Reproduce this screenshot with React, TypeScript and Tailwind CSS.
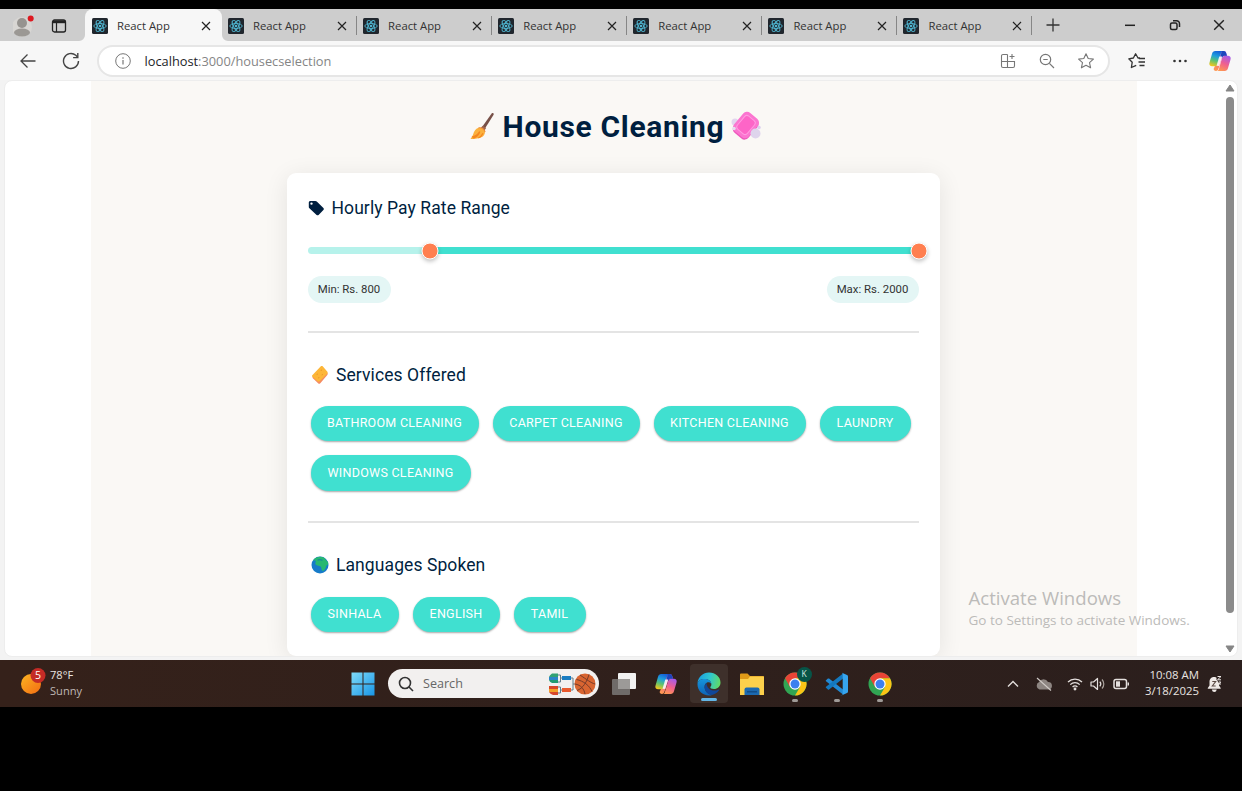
import type { ReactNode } from "react";

const SEGOE = "font-['Open_Sans','Noto_Sans',sans-serif]";

function ReactMark() {
  return (
    <svg viewBox="0 0 16 16" className="size-4 shrink-0">
      <rect width="16" height="16" rx="1.5" fill="#20262d" />
      <g fill="none" stroke="#4fb4cf" strokeWidth="0.9">
        <ellipse cx="8" cy="8" rx="6.2" ry="2.5" />
        <ellipse cx="8" cy="8" rx="6.2" ry="2.5" transform="rotate(60 8 8)" />
        <ellipse cx="8" cy="8" rx="6.2" ry="2.5" transform="rotate(120 8 8)" />
      </g>
      <circle cx="8" cy="8" r="1.3" fill="#4fb4cf" />
    </svg>
  );
}

function Cross({ className }: { className: string }) {
  return (
    <svg viewBox="0 0 10 10" className={className}>
      <path d="M1 1 9 9M9 1 1 9" stroke="#222" strokeWidth="1.2" fill="none" />
    </svg>
  );
}

function Tab({ active = false, divider = true }: { active?: boolean; divider?: boolean }) {
  return (
    <div
      className={
        active
          ? "relative flex h-8 w-[136.5px] shrink-0 items-center rounded-t-lg bg-[#f7f7f7] pt-px pl-[7px]"
          : "relative flex h-8 w-[135.1px] shrink-0 items-center pt-px pl-[6.5px]"
      }
    >
      {active && (
        <>
          <svg viewBox="0 0 6 6" className="absolute bottom-0 -left-1.5 size-1.5">
            <path d="M6 0v6H0A6 6 0 0 0 6 0Z" fill="#f7f7f7" />
          </svg>
          <svg viewBox="0 0 6 6" className="absolute -right-1.5 bottom-0 size-1.5">
            <path d="M0 0v6h6A6 6 0 0 1 0 0Z" fill="#f7f7f7" />
          </svg>
        </>
      )}
      <ReactMark />
      <span className="ml-[9px] w-[79px] text-[11.300px] leading-4 whitespace-nowrap text-[#333]">React App</span>
      <Cross className="ml-[5px] size-[10px]" />
      {!active && divider && <div className="absolute top-[7px] right-0 h-[19px] w-px bg-[#868686]" />}
    </div>
  );
}

function Copilot({ className, id }: { className: string; id: string }) {
  return (
    <svg viewBox="0 0 24 24" className={className}>
      <defs>
        <linearGradient id={id + "a"} x1="0.6" y1="0" x2="0.3" y2="1">
          <stop offset="0" stopColor="#1560d8" />
          <stop offset="0.35" stopColor="#1e9fdc" />
          <stop offset="0.65" stopColor="#5cc272" />
          <stop offset="1" stopColor="#f2c61c" />
        </linearGradient>
        <linearGradient id={id + "b"} x1="0.7" y1="0" x2="0.3" y2="1">
          <stop offset="0" stopColor="#a75be8" />
          <stop offset="0.5" stopColor="#f0608f" />
          <stop offset="1" stopColor="#ff9852" />
        </linearGradient>
      </defs>
      <path d="M14 1h2.2c1.4 0 2.2.9 2.6 2.2l.9 3H17c-1.500 0-2.300.8-2.700 2L10.500 20c-.5 1.600-1.200 3-3 3-1.400 0-2.100-1-2.500-2.200z" fill={`url(#${id}b)`} />
      <path d="M6.800 1h9c-1.300 0-2.100.8-2.500 2.100L9.800 15c-.5 1.700-1.300 2.800-3.200 2.800H3.300C.8 17.800-.1 16 .6 13.500L3.300 4C3.900 2 5 1 6.800 1Z" fill={`url(#${id}a)`} />
      <path d="M17.200 23h-9c1.300 0 2.100-.8 2.500-2.100L14.200 9c.5-1.700 1.300-2.800 3.200-2.800h3.300c2.500 0 3.400 1.800 2.700 4.300L20.700 20c-.6 2-1.700 3-3.500 3Z" fill={`url(#${id}b)`} />
      <path d="M13.8 1h2.300c1.400 0 2.200.9 2.600 2.200l.9 3h-2.200c-1.600 0-2.300.4-2.900 2l-1.900-.2Z" fill="#1a46bd" />
      <path d="m11.200 7 3.200.1-3.200 10.400-3-.2Z" fill="#fff" opacity=".85" />
    </svg>
  );
}

function Broom() {
  return (
    <svg viewBox="0 0 28 30" className="h-[30px] w-[26px]">
      <path d="M23.500 1.200c1.400-.8 2.500.3 1.900 1.600L14.600 20l-2.900-2z" fill="#775047" />
      <path d="m13.600 14.600 3.800 2.500-3.200 4.600-4-2.800z" fill="#a0654d" />
      <path d="M9.500 17c3.300-.6 6.400 1.500 6.600 5-.5 4.500-4.500 7-15.600 7 1.100-1.500 2-2.800 2.700-4.700 1.400-4 3.100-6.700 6.300-7.300Z" fill="#fbb13d" />
      <path d="M2 27c4-1 6.500-3 8.500-6-1 4-4 6-7 7.200M9 28c2.500-1.200 4-3 5-5.200" stroke="#f5861f" strokeWidth="1.300" fill="none" />
      <path d="M9.200 17c3.500-.6 6.600 1.400 7 4.600" stroke="#ec8d37" strokeWidth="1.300" fill="none" />
    </svg>
  );
}

function Soap() {
  return (
    <svg viewBox="0 0 30 30" className="h-[30px] w-[30px]">
      <circle cx="4" cy="11" r="3.500" fill="#e2d5ee" />
      <rect x="5.500" y="3.500" width="19" height="24" rx="5" transform="rotate(40 15 15)" fill="#ee59bd" />
      <rect x="5.500" y="2" width="19" height="24" rx="5" transform="rotate(40 15 14)" fill="#fb75d0" />
      <rect x="8.500" y="5.500" width="13" height="17" rx="3" transform="rotate(40 15 14)" fill="#fd65c7" stroke="#ff9ae0" />
      <circle cx="24.500" cy="22.500" r="5" fill="#ded4ec" />
      <circle cx="28" cy="16.500" r="1.800" fill="#ddd0ee" />
      <circle cx="3" cy="17.500" r="1.800" fill="#e6dcee" />
    </svg>
  );
}

function Sponge() {
  return (
    <svg viewBox="0 0 18 20" className="h-5 w-[18px]">
      <path d="M1.500 11.500 10 3c.8-.7 1.600-.5 2.300.2l4 4.600c.6.800.5 1.500 0 2.200l-7 8.200c-.7.700-1.500.8-2.200 0l-5.500-5.300z" fill="#f58b62" />
      <path d="M1.300 10.200 9.600 1.500c.7-.6 1.600-.6 2.300 0l4.300 5c.6.800.5 1.400 0 2.200l-7.500 7.500c-.8.700-1.500.6-2.200 0l-5-4.500c-.6-.5-.7-1-.2-1.500Z" fill="#fdb638" />
      <path d="m6 9 .5.500M10 5l.6.500M11 9.500l.5.500M7.500 12.500l.5.500" stroke="#e89028" strokeWidth="1.500" />
    </svg>
  );
}

function Globe() {
  return (
    <svg viewBox="0 0 18 18" className="size-[18px]">
      <circle cx="9" cy="9" r="8.500" fill="#167bc9" />
      <path d="M2 4.500C4.500 1 9.500-.3 13.500 2c1.200 1 .6 1.700 1.600 2.200 1.500 1 2.300 2.300 2.100 4-.7 1-2 .8-2.200 2.500-.2 1.500-1.500 3.800-3.300 4.300-1.500-.8-1-2.500-1.700-4C9.200 9.500 5.500 10 4.500 8.200 3.800 6.500 5.700 5 4.200 4.500Z" fill="#27b872" />
      <path d="M6.500 4.200c1.500-1 3.500-.6 5 .2" stroke="#178e92" strokeWidth="1.200" fill="none" />
    </svg>
  );
}

function Chrome() {
  return (
    <svg viewBox="0 0 24 24" className="size-6">
      <circle cx="12" cy="12" r="11.500" fill="#31a553" />
      <path d="M2.040 6.250A11.500 11.500 0 0 1 21.960 6.250H12L7 15Z" fill="#e84436" />
      <path d="M21.960 6.250A11.500 11.500 0 0 1 12 23.500l5-8.600L12 6.250Z" fill="#fbc416" />
      <circle cx="12" cy="12" r="5.700" fill="#fff" />
      <circle cx="12" cy="12" r="4.500" fill="#3c7fee" />
    </svg>
  );
}

function Edge() {
  return (
    <svg viewBox="0 0 24 24" className="size-6">
      <defs>
        <linearGradient id="edgeTop" x1="0" y1="0.400" x2="1" y2="0.600">
          <stop offset="0" stopColor="#1b9fe0" />
          <stop offset="0.500" stopColor="#2fc6cf" />
          <stop offset="1" stopColor="#62dc62" />
        </linearGradient>
        <linearGradient id="edgeLow" x1="0" y1="0" x2="0" y2="1">
          <stop offset="0" stopColor="#1695dc" />
          <stop offset="1" stopColor="#0d63b6" />
        </linearGradient>
      </defs>
      <path d="M.5 11C1.200 4.800 6 .5 12 .5c6.500 0 11.500 4.500 11.500 10 0 4-3 6.500-6.500 6.500-2.500 0-4-.8-3.700-2 1-1 1.200-2 1-3.200C14 8.800 11.200 7 7.500 7 4 7 1.500 8.500.5 11Z" fill="url(#edgeTop)" />
      <path d="M.5 12C.8 8.800 4 7 7.500 7c3.800 0 6.500 2 6.800 4.800-1-1.300-2.500-2-4.300-1.200-2.500 1.200-3 4-2 7 1 2.800 3.500 5 7 5.400-1 .4-2 .5-3 .5C5.500 23.500.3 18.500.5 12Z" fill="url(#edgeLow)" />
      <path d="M9.700 11c-2 1.500-2.500 4-1.600 6.800 1 3 4 5.200 6.900 5.200 2.900-.8 5.300-2.300 7-4.700.4-.6-.1-.9-.7-.6-3.500 1.600-7.300 1-9.500-1.200C10.300 15 9.500 13 9.700 11Z" fill="#10479a" />
    </svg>
  );
}

function VsCode() {
  return (
    <svg viewBox="0 0 24 24" className="size-6">
      <path d="m1 8.200 1.900-1.600c.4-.3.8-.3 1.200 0L18 17.500v5L1 9.300c-.4-.3-.4-.8 0-1.100Z" fill="#2189d4" />
      <path d="m1 15.800 1.900 1.600c.4.3.8.3 1.200 0L18 6.500v-5L1 14.700c-.4.3-.4.800 0 1.100Z" fill="#1478be" />
      <path d="M17 .8 22 3c.8.4 1 1 1 1.600v14.800c0 .7-.3 1.300-1 1.600l-5 2.300c-.6.200-1 .1-1.500-.4 1 .8 2.200.1 2.200-1V2.100c0-1.100-1.200-1.800-2.200-1 .5-.5 1-.6 1.500-.3Z" fill="#36a5ef" />
    </svg>
  );
}

function Running() {
  return <div className="absolute bottom-[1px] left-1/2 h-[3px] w-[6px] -translate-x-1/2 rounded-full bg-[#a09b98]" />;
}

function AppSlot({ children, className }: { children: ReactNode; className: string }) {
  return <div className={"relative flex h-[39px] shrink-0 items-center justify-center " + className}>{children}</div>;
}

function Pill({ label, className }: { label: string; className: string }) {
  return (
    <button
      className={
        "flex h-[35.500px] shrink-0 items-center justify-center rounded-full bg-[#40e0d0] pt-px text-[12.500px] tracking-[0.022em] whitespace-nowrap text-white shadow-[0_1px_2px_rgba(0,0,0,0.350)] " +
        className
      }
    >
      {label}
    </button>
  );
}

function Thumb({ className }: { className: string }) {
  return (
    <div
      className={
        "absolute top-1/2 size-[17px] -translate-1/2 rounded-full border border-white bg-[#ff7f50] shadow-[0_2px_4px_rgba(0,0,0,0.250)] " +
        className
      }
    />
  );
}

function BrowserChrome() {
  return (
    <>
      <div className="flex h-8 shrink-0 items-center bg-[#cdcdcd]">
        <div className="flex w-[85px] shrink-0 items-center pt-px pl-[13px]">
          <svg viewBox="0 0 22 22" className="size-[22px]">
            <circle cx="9" cy="12" r="10" fill="#d8d6d3" />
            <circle cx="9" cy="8" r="5" fill="#96938f" />
            <ellipse cx="9" cy="17.500" rx="8" ry="4" fill="#9b9894" />
            <circle cx="17.700" cy="3.500" r="3" fill="#dd1920" />
          </svg>
          <svg viewBox="0 0 16 16" className="ml-4 size-4" fill="none" stroke="#222">
            <rect x="1.500" y="2" width="13" height="12" rx="2" strokeWidth="1.300" />
            <path d="M2 3.800h12" strokeWidth="2.800" />
            <path d="M5.500 5v9" strokeWidth="1.200" />
          </svg>
        </div>
        <Tab active />
        <Tab />
        <Tab />
        <Tab />
        <Tab />
        <Tab />
        <Tab />
        <svg viewBox="0 0 14 14" className="ml-[14px] size-[14px]">
          <path d="M7 .5v13M.5 7h13" stroke="#333" strokeWidth="1.300" />
        </svg>
        <svg viewBox="0 0 12 12" className="ml-[64px] size-3">
          <path d="M1 6.300h10" stroke="#222" strokeWidth="1.500" />
        </svg>
        <svg viewBox="0 0 12 12" className="ml-[33px] size-3" fill="none" stroke="#222" strokeWidth="1.500">
          <rect x="1.500" y="4" width="6.500" height="6.500" rx="1.500" />
          <path d="M4 1.700h3.500a3 3 0 0 1 3 3V8" />
        </svg>
        <Cross className="ml-[32px] size-[12px]" />
      </div>

      <div className="flex h-[39px] shrink-0 items-center bg-[#f7f7f7]">
        <div className="flex w-[97px] shrink-0 items-center pl-[19.500px]">
          <svg viewBox="0 0 16 16" className="size-4" fill="none" stroke="#444" strokeWidth="1.300">
            <path d="M15.500 8H1M7.500 1.500 1 8l6.500 6.500" />
          </svg>
          <svg viewBox="0 0 18 18" className="ml-[26px] size-[18px]" fill="none" stroke="#444" strokeWidth="1.400">
            <path d="M16.500 9A7.500 7.500 0 1 1 13.800 3.250L15.500 5" />
            <path d="M15.800 1v4.600h-4.700" />
          </svg>
        </div>
        <div className="mt-px flex h-8 w-[1013px] shrink-0 items-center rounded-full border-2 border-[#e6e6e6] bg-white pl-[15.500px]">
          <svg viewBox="0 0 16 16" className="size-4" fill="none" stroke="#777">
            <circle cx="8" cy="8" r="7.300" />
            <path d="M8 7v4.500M8 4.300v1.400" strokeWidth="1.200" />
          </svg>
          <span className="ml-[14px] w-[855px] pt-px text-[12.800px] whitespace-nowrap text-[#858585]">
            <span className="text-[#1d1d28]">localhost</span>:3000/housecselection
          </span>
          <svg viewBox="0 0 16 16" className="size-4 shrink-0" fill="none" stroke="#777" strokeWidth="1.100">
            <path d="M7.500 1.500H3A1.500 1.500 0 0 0 1.500 3v10A1.500 1.500 0 0 0 3 14.500h10a1.500 1.500 0 0 0 1.500-1.500V8.500H1.500M7.500 1.500v13M12 1v5M9.500 3.500h5" />
          </svg>
          <svg viewBox="0 0 16 16" className="ml-[23px] size-4 shrink-0" fill="none" stroke="#777" strokeWidth="1.200">
            <circle cx="6.500" cy="6.500" r="5.200" />
            <path d="m10.400 10.400 4.600 4.600M4.300 6.500h4.400" />
          </svg>
          <svg viewBox="0 0 18 18" className="ml-[22px] size-[18px] shrink-0" fill="none" stroke="#777" strokeWidth="1.100" strokeLinejoin="round">
            <path d="m9 1.700 2.200 4.800 5.200.6-3.900 3.500 1.100 5.200L9 13.200l-4.600 2.600 1.100-5.200L1.600 7.100l5.200-.6z" />
          </svg>
        </div>
        <svg viewBox="0 0 18 18" className="mt-px ml-[18px] size-[18px] shrink-0" fill="none" stroke="#333" strokeWidth="1.300" strokeLinejoin="round">
          <path d="M12 6 10 6 7.600 1.700 5.400 6 .8 6.800l3.400 3.500-.8 5.200 4.800-2.200M11 6.500H17M10.500 10h6.500M11.500 13.500h5" />
        </svg>
        <svg viewBox="0 0 16 4" className="ml-[26px] h-1 w-4 shrink-0" fill="#333">
          <circle cx="2.500" cy="2" r="1.300" />
          <circle cx="8" cy="2" r="1.300" />
          <circle cx="13.500" cy="2" r="1.300" />
        </svg>
        <Copilot id="bar" className="ml-[21px] size-[22px] shrink-0" />
      </div>
    </>
  );
}

function SearchCard() {
  return (
    <div className="mt-[17px] ml-[195.500px] h-[483px] w-[653px] rounded-[9px] bg-white px-[21px] shadow-[0_4px_24px_rgba(0,0,0,0.090)]">
      <div className="flex h-[69px] items-center text-[17.500px] text-[#001f3f]">
        <svg viewBox="0 0 16 16" className="size-4">
          <path
            fillRule="evenodd"
            d="M.8 2.500c0-1 .7-1.600 1.600-1.600h5c.6 0 1 .2 1.400.6l6.600 6.400c.6.600.6 1.500 0 2.100l-4.800 4.900c-.6.600-1.400.6-2 0L1.400 8.200C1 7.800.8 7.400.8 6.900zm2.700 2.300a1.200 1.200 0 1 0 0-2.400 1.200 1.200 0 0 0 0 2.400Z"
            fill="#001f3f"
          />
        </svg>
        <h2 className="ml-2 pt-[2px] tracking-[0.005em]">Hourly Pay Rate Range</h2>
      </div>

      <div className="relative mt-[5px] flex h-[7px] items-center rounded-full bg-[#b6f2eb]">
        <div className="ml-[122px] h-full flex-1 bg-[#40e0d0]" />
        <Thumb className="left-[122px]" />
        <Thumb className="left-full" />
      </div>

      <div className="mt-[22px] flex justify-between text-[11.400px] text-[#333]">
        <div className="flex h-[27px] w-[83px] items-center justify-center rounded-full bg-[#e4f6f5]">Min: Rs. 800</div>
        <div className="flex h-[27px] w-[92px] items-center justify-center rounded-full bg-[#e4f6f5]">Max: Rs. 2000</div>
      </div>

      <div className="mt-[28px] h-[1.500px] bg-[#e4e4e4]" />

      <div className="mt-[27px] flex h-[30px] items-center pl-[3px] text-[17.500px] text-[#001f3f]">
        <Sponge />
        <h2 className="ml-[7.500px] pt-px tracking-[0.005em]">Services Offered</h2>
      </div>
      <div className="mt-[16px] flex flex-wrap gap-x-[14px] gap-y-[14px] pl-[3px]">
        <Pill label="BATHROOM CLEANING" className="w-[168px]" />
        <Pill label="CARPET CLEANING" className="w-[147px]" />
        <Pill label="KITCHEN CLEANING" className="w-[152px]" />
        <Pill label="LAUNDRY" className="w-[91px]" />
        <Pill label="WINDOWS CLEANING" className="w-[160px]" />
      </div>

      <div className="mt-[30.500px] h-[1.500px] bg-[#e4e4e4]" />

      <div className="mt-[27px] flex h-[30px] items-center pl-[3px] text-[17.500px] text-[#001f3f]">
        <Globe />
        <h2 className="ml-[7.500px] pt-px tracking-[0.005em]">Languages Spoken</h2>
      </div>
      <div className="mt-[17px] flex gap-[14px] pl-[3px]">
        <Pill label="SINHALA" className="w-[88px]" />
        <Pill label="ENGLISH" className="w-[87px]" />
        <Pill label="TAMIL" className="w-[72px]" />
      </div>
    </div>
  );
}

function Viewport() {
  return (
    <div className="flex h-[580px] shrink-0 bg-[#f3f3f3] px-1 pb-[3px]">
      <div className="relative flex w-[1234px] overflow-hidden rounded-lg border border-[#ededed] bg-white pl-[86px]">
        <main className="h-full w-[1046px] shrink-0 overflow-hidden bg-[#faf8f5] font-[Roboto,sans-serif]">
          <div className="flex h-[75px] items-end justify-center">
            <div className="flex h-[60px] items-center pl-[3px]">
              <Broom />
              <h1 className="mx-[7px] pt-px text-[30px] leading-none font-bold tracking-[0.022em] whitespace-nowrap text-[#001f3f]">
                House Cleaning
              </h1>
              <Soap />
            </div>
          </div>
          <SearchCard />
        </main>
        <div className="ml-[86px] flex w-[14px] flex-col items-center justify-between pt-[3px] pb-[3px]">
          <svg viewBox="0 0 10 8" className="h-2 w-[10px]">
            <path d="M5 1 9 7H1z" fill="#858585" stroke="#858585" strokeLinejoin="round" />
          </svg>
          <div className="mt-[5px] mb-auto h-[516px] w-2 rounded-full bg-[#8b8b8b]" />
          <svg viewBox="0 0 10 8" className="h-2 w-[10px]">
            <path d="M5 7 1 1h8z" fill="#858585" stroke="#858585" strokeLinejoin="round" />
          </svg>
        </div>
        <div className={"absolute top-[505px] left-[963.500px] whitespace-nowrap text-[#bcbbb9] " + SEGOE}>
          <div className="text-[18.600px] leading-6">Activate Windows</div>
          <div className="text-[13.500px] leading-[21px]">Go to Settings to activate Windows.</div>
        </div>
      </div>
    </div>
  );
}

function Taskbar() {
  return (
    <div className="flex h-[47px] shrink-0 items-center bg-linear-to-r from-[#35211a] to-[#2b1f1d] text-[#e9e4e1]">
      <div className="flex w-[350px] shrink-0 items-center pb-[2px] pl-5">
        <svg viewBox="0 0 26 30" className="h-[30px] w-[26px]">
          <defs>
            <linearGradient id="sun" x1="0" y1="0" x2="1" y2="1">
              <stop offset="0" stopColor="#fbb522" />
              <stop offset="1" stopColor="#f46b12" />
            </linearGradient>
          </defs>
          <circle cx="11" cy="16" r="10" fill="url(#sun)" />
          <circle cx="18" cy="7.500" r="7.500" fill="#c42b26" />
          <text x="18" y="11.300" textAnchor="middle" fontSize="10.500" fill="#fff">
            5
          </text>
        </svg>
        <div className="ml-1 text-[11.100px] leading-[15.500px]">
          <div>78°F</div>
          <div className="text-[#bfb8b4]">Sunny</div>
        </div>
      </div>

      <AppSlot className="w-[25px]">
        <svg viewBox="0 0 24 24" className="size-6">
          <defs>
            <linearGradient id="win" x1="0" y1="0" x2="1" y2="1">
              <stop offset="0" stopColor="#7fdcfa" />
              <stop offset="1" stopColor="#1895e6" />
            </linearGradient>
          </defs>
          <path d="M.5.500h11v11H.5zM12.500.500h11v11h-11zM.5 12.500h11v11H.5zM12.500 12.500h11v11h-11z" fill="url(#win)" />
        </svg>
      </AppSlot>

      <div className="ml-[13px] flex h-[29px] w-[211px] shrink-0 items-center rounded-full bg-[#f2f0ef] pl-[10px]">
        <svg viewBox="0 0 16 16" className="size-4" fill="none" stroke="#333" strokeWidth="1.600">
          <circle cx="7" cy="7" r="5.500" />
          <path d="m11 11 4 4" />
        </svg>
        <span className="ml-[9px] w-[124.500px] pt-px text-[12.600px] text-[#666]">Search</span>
        <svg viewBox="0 0 50 24" className="h-6 w-[50px]">
          <path d="M8 1.500H4Q1.500 3 1 5h9V1.500Z" fill="#31a174" />
          <path d="M1 5h9v3H1z" fill="#2b84c7" />
          <path d="M1 8h9v3H4Q1.500 10 1 8Z" fill="#239b70" />
          <path d="M1 14h9v3H1z" fill="#d94727" />
          <path d="M1 17h9v3H1z" fill="#f3a128" />
          <path d="M1 20h9v3H5Q2 22 1 20Z" fill="#d8482d" />
          <path d="M10 3h2.500v7H10M12.500 6H15M10 15h2.500v6H10M12.500 18H15M23 6h2v12h-2M25 12h3" stroke="#607c8a" fill="none" />
          <path d="M14 4h9v4h-9z" fill="#197cc1" />
          <path d="M14 16h9v4h-9z" fill="#e95a2e" />
          <circle cx="37" cy="12" r="10.500" fill="#d96531" />
          <path d="M28.500 7.500c7 1.500 13 6 15.500 12M32 3c6 4 11 8 15 9M41 2.500c-2 7-6 14-12 16M27 12c6 1 9 5 10 10" stroke="#763b29" strokeWidth="1" fill="none" />
        </svg>
      </div>

      <AppSlot className="ml-[6px] w-[38px]">
        <svg viewBox="0 0 24 22" className="h-[22px] w-6">
          <rect x="6" width="18" height="16" rx="1" fill="#f2f2f2" />
          <rect y="6" width="18" height="16" rx="1" fill="#6f6b69" />
          <rect x="6" y="6" width="12" height="10" fill="#9c9a98" />
        </svg>
      </AppSlot>
      <AppSlot className="ml-1 w-[38px]">
        <Copilot id="task" className="size-[22px]" />
      </AppSlot>
      <AppSlot className="ml-[5px] w-[38px] rounded bg-[#3e302b]">
        <Edge />
        <div className="absolute bottom-[2px] left-1/2 h-[3px] w-[16px] -translate-x-1/2 rounded-full bg-[#63b5e6]" />
      </AppSlot>
      <AppSlot className="ml-[4.500px] w-[38px]">
        <svg viewBox="0 0 24 24" className="size-6">
          <path d="M0 2.500Q0 1.500 1 1.500h6.500l2.500 2.500H23q1 0 1 1V22.500H0Z" fill="#df9a18" />
          <path d="M0 7h8l2-2.500h14V23H0Z" fill="#fcd04c" />
          <path d="M4.500 23v-5.500q0-2 2-2h11q2 0 2 2V23Z" fill="#1b69b1" />
          <path d="M7 19h10v1.500H7z" fill="#114d88" />
        </svg>
      </AppSlot>
      <AppSlot className="ml-[5px] w-[38px]">
        <Chrome />
        <div className="absolute top-[3px] right-[2px] flex size-[15px] items-center justify-center rounded-full bg-[#075447] text-[8.500px] text-[#d9ebe6]">
          K
        </div>
        <Running />
      </AppSlot>
      <AppSlot className="ml-[4.500px] w-[38px]">
        <VsCode />
        <Running />
      </AppSlot>
      <AppSlot className="ml-[4.500px] w-[38px]">
        <Chrome />
        <Running />
      </AppSlot>

      <svg viewBox="0 0 12 8" className="ml-[108.500px] h-2 w-3 shrink-0" fill="none" stroke="#e4dfdc" strokeWidth="1.400">
        <path d="m1 6.500 5-5 5 5" />
      </svg>
      <svg viewBox="0 0 18 14" className="ml-[16px] h-[14px] w-[18px] shrink-0">
        <path d="M4.500 12.500a4 4 0 0 1-.4-7.500A5 5 0 0 1 13 5a3.800 3.800 0 0 1 1 7.500Z" fill="#8d8581" />
        <path d="m2 1 14 12.500" stroke="#d1cbc7" strokeWidth="1.100" />
      </svg>
      <svg viewBox="0 0 16 14" className="ml-[14px] h-[14px] w-4 shrink-0" fill="none" stroke="#e5e0de" strokeWidth="1.300">
        <path d="M1 5a10 10 0 0 1 14 0M3.300 7.600a6.500 6.500 0 0 1 9.400 0M5.600 10a3.300 3.300 0 0 1 4.800 0" />
        <circle cx="8" cy="12" r=".8" />
      </svg>
      <svg viewBox="0 0 16 14" className="ml-[7px] h-[14px] w-4 shrink-0" fill="none" stroke="#e5e0de" strokeWidth="1.200" strokeLinejoin="round">
        <path d="M1 5h2.500L7.500 1.500v11L3.500 9H1ZM9.800 4.700a3.500 3.500 0 0 1 0 4.600" />
        <path d="M12 2.500a6.500 6.500 0 0 1 0 9" stroke="#aaa29d" />
      </svg>
      <svg viewBox="0 0 16 12" className="ml-[7px] h-3 w-4 shrink-0" fill="none" stroke="#e5e0de" strokeWidth="1.500">
        <rect x="1" y="1.500" width="12.500" height="9" rx="2" />
        <path d="M15.300 4.500v3" />
        <path d="M3 3.300h4v5.400H3z" fill="#e5e0de" stroke="none" />
      </svg>
      <div className="w-[70px] shrink-0 pb-[2px] text-right text-[11.400px] leading-[15.500px] whitespace-nowrap">
        <div>10:08 AM</div>
        <div>3/18/2025</div>
      </div>
      <svg viewBox="0 0 16 18" className="ml-2 h-[18px] w-4 shrink-0">
        <path d="M7 2C4 2 2.500 4.300 2.500 7v3.500L.8 13v.8h12.900V13L12 10.500V7c0-2.700-2-5-5-5Z" fill="#eee9e6" />
        <path d="M4.800 14.500h5Q9.300 17 7.300 17t-2.500-2.500Z" fill="#eee9e6" />
        <path d="M5.300 6.500h3.400l-3.400 4.500h3.400" fill="none" stroke="#5b4a44" strokeWidth="1.100" />
        <path d="M9.500 0H16v9h-3.500L9.500 4.500Z" fill="#2b1f1d" />
        <path d="M10.500 1.500h3.500l-3.500 3.300H14M11.800 7h2l-2 2h2.200" fill="none" stroke="#eee9e6" strokeWidth="1" />
      </svg>
    </div>
  );
}

export default function App() {
  return (
    <div className={"flex h-[791px] w-[1242px] flex-col overflow-hidden bg-black pt-[9px] " + SEGOE}>
      <BrowserChrome />
      <Viewport />
      <Taskbar />
    </div>
  );
}
